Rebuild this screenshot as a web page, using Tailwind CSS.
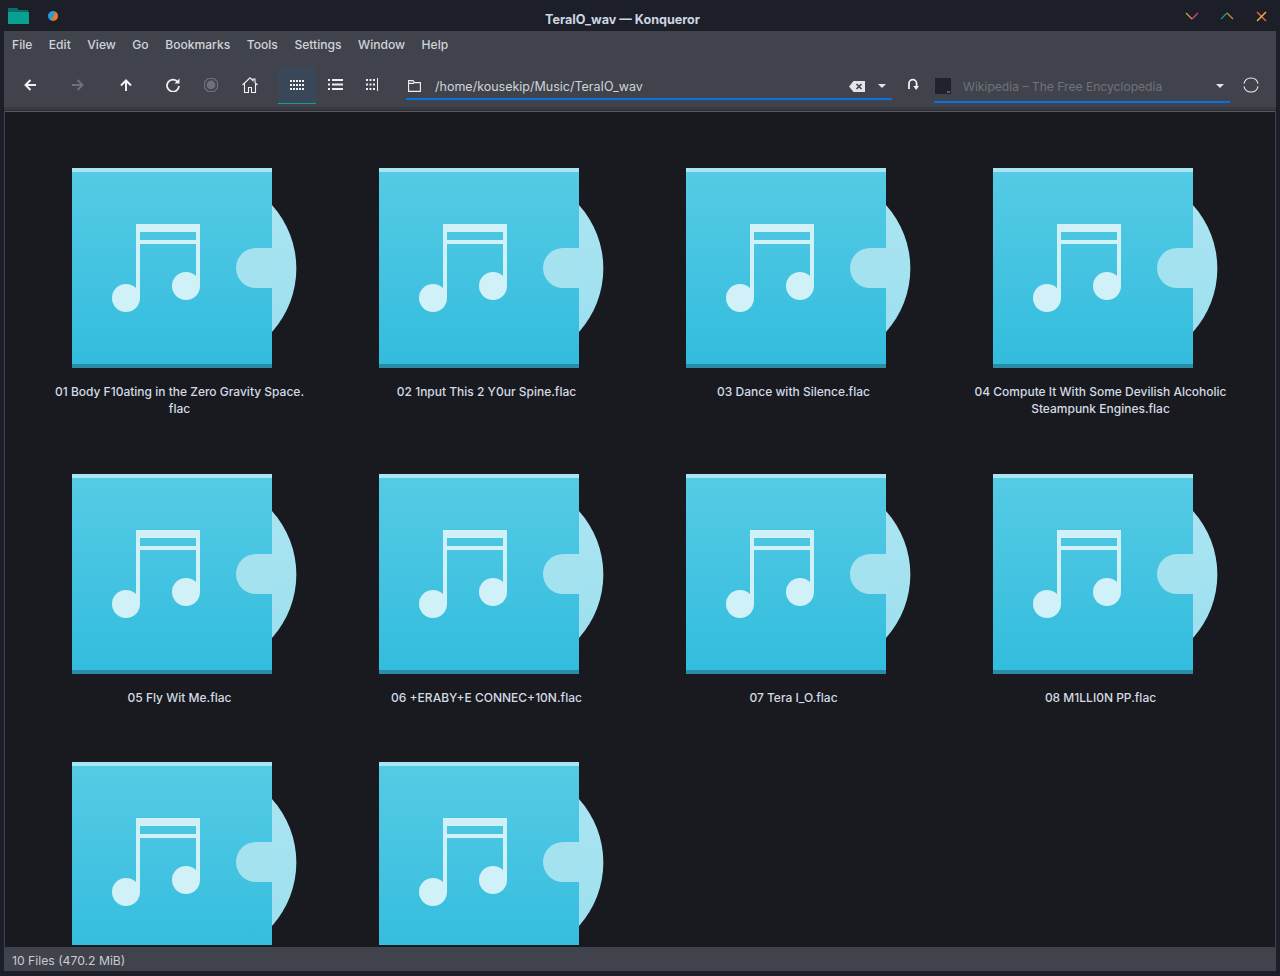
<!DOCTYPE html>
<html lang="en">
<head>
    <meta charset="UTF-8">
    <title>TeraIO_wav — Konqueror</title>
    <script src="https://cdn.jsdelivr.net/npm/@tailwindcss/browser@4"></script>
</head>
<body class="bg-[#1c1f28] w-[1280px] h-[976px] overflow-hidden flex flex-col font-['Inter',sans-serif] text-[13px]">

    <!-- shared file icon -->
    <svg class="absolute w-0 h-0">
        <defs>
            <linearGradient id="cover" x1="0" y1="0" x2="0" y2="1">
                <stop offset="0" stop-color="#56cbe5"/>
                <stop offset="1" stop-color="#32bcdd"/>
            </linearGradient>
            <linearGradient id="disc" x1="0" y1="0" x2="0" y2="1">
                <stop offset="0" stop-color="#abe4f1"/>
                <stop offset="1" stop-color="#9de0f0"/>
            </linearGradient>
        </defs>
        <symbol id="flac" viewBox="0 0 256 200">
            <path d="M220 37A95 95 0 0 1 220 164Z" fill="url(#disc)"/>
            <rect x="20" y="0" width="200" height="200" fill="url(#cover)"/>
            <rect x="20" y="0" width="200" height="4" fill="#a8e4f1"/>
            <rect x="20" y="196" width="200" height="4" fill="#2a8da5"/>
            <path d="M220 80H204A20 20 0 0 0 204 120H220Z" fill="#a5e2f0"/>
            <path d="M84 56H148V118H144V76H88V130H84ZM88 64V72H144V64Z" fill="#d0f1f8"/>
            <circle cx="74" cy="130" r="14" fill="#d0f1f8"/>
            <circle cx="134" cy="118" r="14" fill="#d0f1f8"/>
        </symbol>
    </svg>

    <!-- title bar -->
    <header class="h-[31px] shrink-0 flex items-center relative text-[#d6dae2]">
        <svg class="ml-[7px] mt-[1px]" width="22" height="18" viewBox="0 0 22 18"><path d="M1 1H10L12 3H21V6H1Z" fill="#0b6e66"/><rect x="1" y="5" width="21" height="12" fill="#0aa091"/></svg>
        <span class="ml-[19px] mt-[1px] w-[10px] h-[10px] rounded-full bg-[linear-gradient(115deg,#2a9be0_45%,#f5781f_62%)]"></span>
        <span class="absolute left-0 right-0 top-[12px] pr-[35px] text-center font-bold text-[12.6px] leading-[15px] text-[#cdd5e2]">TeraIO_wav — Konqueror</span>
        <div class="ml-auto flex items-center mt-[1px]">
            <svg width="14" height="9" viewBox="0 0 14 9" fill="none" stroke-width="1.2" class="mr-[21px]"><path d="M1 1L7 7" stroke="#d8a13c"/><path d="M7 7L13 1" stroke="#d93fa0"/></svg>
            <svg width="14" height="9" viewBox="0 0 14 9" fill="none" stroke-width="1.2" class="mr-[22px]"><path d="M1 7L7 1" stroke="#1f9c8e"/><path d="M7 1L13 7" stroke="#c98a3a"/></svg>
            <svg width="11" height="11" viewBox="0 0 11 11" fill="none" stroke-width="1.4" class="mr-[13px]"><path d="M1 1L10 10" stroke="#f0623c"/><path d="M10 1L1 10" stroke="#f2b53a"/></svg>
        </div>
    </header>

    <main class="mx-[4px] flex-1 min-h-0 flex flex-col bg-[#40434c]">
        <!-- menu bar -->
        <nav class="h-[28px] shrink-0 flex items-center gap-[16.5px] pl-[8px] text-[#d0d3d9] text-[12.1px] font-medium">
            <span>File</span><span>Edit</span><span>View</span><span>Go</span><span>Bookmarks</span><span>Tools</span><span>Settings</span><span>Window</span><span>Help</span>
        </nav>

        <!-- tool bar -->
        <div class="h-[48px] shrink-0 flex items-center relative text-[#e6e8ec]">
            <svg width="12" height="12" viewBox="0 0 12 12" fill="none" stroke="#eef0f3" stroke-width="2" class="ml-[20px] mt-[4px]"><path d="M12 6H2M6.500 1L1.500 6L6.500 11"/></svg>
            <svg width="12" height="12" viewBox="0 0 12 12" fill="none" stroke="#6d7078" stroke-width="2" class="ml-[36px] mt-[4px]"><path d="M0 6H10M5.500 1L10.500 6L5.500 11"/></svg>
            <svg width="12" height="12" viewBox="0 0 12 12" fill="none" stroke="#eef0f3" stroke-width="2" class="ml-[36px] mt-[4px]"><path d="M6 12V2M1 6.500L6 1.500L11 6.500"/></svg>
            <svg width="14" height="14" viewBox="0 0 14 14" fill="none" stroke="#eef0f3" stroke-width="1.800" class="ml-[34px] mt-[4px]"><path d="M11.800 4A6 6 0 1 0 13 8"/><path d="M13.500 .5V5.500H8.500Z" fill="#eef0f3" stroke="none"/></svg>
            <svg width="14" height="14" viewBox="0 0 14 14" class="ml-[24px] mt-[4px]"><path d="M4 .5H10L13.500 4V10L10 13.500H4L.5 10V4Z" fill="none" stroke="#6d7078" stroke-width="1.200"/><circle cx="7" cy="7" r="4.400" fill="#6d7078"/></svg>
            <svg width="16" height="16" viewBox="0 0 16 16" fill="none" stroke="#eef0f3" stroke-width="1.100" class="ml-[24px] mt-[4px]"><path d="M.5 8L8 .8L11 3.700V2H13V5.600L15.500 8M2.500 6.500V15.500H6.500V10.500H9.500V15.500H13.500V6.500"/></svg>
            <div class="ml-[20px] w-[38px] h-[37px] mt-[5px] bg-[#394759] border-b border-[#16a085] flex items-center justify-center">
                <svg width="14" height="10" viewBox="0 0 14 10" fill="#eef0f3"><path d="M0 0h2v2H0zM3 0h2v2H3zM6 0h2v2H6zM9 0h2v2H9zM12 0h2v2h-2zM0 4h2v2H0zM3 4h2v2H3zM6 4h2v2H6zM9 4h2v2H9zM12 4h2v2h-2zM0 8h2v2H0zM3 8h2v2H3zM6 8h2v2H6zM9 8h2v2H9zM12 8h2v2h-2z"/></svg>
            </div>
            <svg width="15" height="11" viewBox="0 0 15 11" fill="#eef0f3" class="ml-[12px] mt-[3px]"><path d="M0 0h2v2H0zM4 0h11v2H4zM0 4.500h2v2H0zM4 4.500h11v2H4zM0 9h2v2H0zM4 9h11v2H4z"/></svg>
            <svg width="13" height="13" viewBox="0 0 13 13" fill="#eef0f3" class="ml-[23px] mt-[3px]"><path d="M0 1h2v2H0zM3.500 1h2v2h-2zM7 1h2v2H7zM0 5.500h2v2H0zM3.500 5.500h2v2h-2zM7 5.500h2v2H7zM0 10h2v2H0zM3.500 10h2v2h-2zM7 10h2v2H7zM11 0h1v13h-1z"/></svg>

            <!-- location bar -->
            <div class="ml-[27px] w-[486px] h-[26px] mt-[8px] border-b-2 border-[#0a6fe0] flex items-center pl-[2px] pr-[6px]">
                <svg width="13" height="12" viewBox="0 0 13 12" fill="none" stroke="#eef0f3" stroke-width="1.100"><path d="M.6 11.400V.6H5L6.500 2.600H12.400V11.400ZM.6 3.400H6"/></svg>
                <span class="ml-[14px] mt-[2px] text-[#d0d3d9] text-[12.5px]">/home/kousekip/Music/TeraIO_wav</span>
                <svg width="16" height="11" viewBox="0 0 16 11" class="ml-auto" fill="#e2e4e8"><path d="M4.500 0H16V11H4.500L0 5.500Z"/><path d="M7.500 3L12.500 8M12.500 3L7.500 8" stroke="#40434c" stroke-width="1.600"/></svg>
                <span class="ml-[13px] w-0 h-0 border-x-[4px] border-x-transparent border-t-[4px] border-t-[#e2e4e8]"></span>
            </div>

            <svg width="12" height="13" viewBox="0 0 12 13" fill="none" class="ml-[15px] mt-[2px]"><path d="M2 11V5.500A3.800 3.800 0 0 1 9.600 5.500V8" stroke="#eef0f3" stroke-width="1.800"/><path d="M6.200 8H12L9.200 12Z" fill="#eef0f3"/></svg>

            <!-- search bar -->
            <div class="ml-[15px] w-[296px] h-[32px] mt-[8px] border-b-2 border-[#0a6fe0] flex items-center pl-[1px] pr-[6px]">
                <span class="w-[16px] h-[16px] bg-[#20232d] relative"><span class="absolute right-[1px] bottom-[1px] w-[3px] h-[2px] bg-[#5c5f68]"></span></span>
                <span class="ml-[12px] mt-[2px] text-[#6f727a] text-[12.1px]">Wikipedia – The Free Encyclopedia</span>
                <span class="ml-auto w-0 h-0 border-x-[4px] border-x-transparent border-t-[4px] border-t-[#e2e4e8]"></span>
            </div>
            <svg width="16" height="16" viewBox="0 0 17 17" fill="none" stroke="#eef0f3" stroke-width="1.100" class="ml-[13px] mt-[4px]"><path d="M1 7A7.700 7.700 0 0 1 16 7M16 10A7.700 7.700 0 0 1 1 10"/></svg>
        </div>

        <div class="h-[4px] shrink-0 bg-[#393b43] border-b border-[#2c2e36]"></div>

        <!-- file view -->
        <section class="flex-1 min-h-0 overflow-hidden bg-[#181a20] ml-[1px] mr-[1px] border-t border-[#55585f] border-b-2 border-b-[#181a20] pl-[21px] pt-[56px]">
            <div class="grid grid-cols-[307px_307px_307px_307px] grid-rows-[306px_288px_288px] text-[#d3dae3] text-center leading-[17px] text-[12px] font-medium">
                <div class="flex flex-col items-center"><svg class="w-[256px] h-[200px] shrink-0"><use href="#flac"/></svg><p class="mt-[15px]">01 Body F10ating in the Zero Gravity Space.<br>flac</p></div>
                <div class="flex flex-col items-center"><svg class="w-[256px] h-[200px] shrink-0"><use href="#flac"/></svg><p class="mt-[15px]">02 1nput This 2 Y0ur Spine.flac</p></div>
                <div class="flex flex-col items-center"><svg class="w-[256px] h-[200px] shrink-0"><use href="#flac"/></svg><p class="mt-[15px]">03 Dance with Silence.flac</p></div>
                <div class="flex flex-col items-center"><svg class="w-[256px] h-[200px] shrink-0"><use href="#flac"/></svg><p class="mt-[15px]">04 Compute It With Some Devilish Alcoholic<br>Steampunk Engines.flac</p></div>
                <div class="flex flex-col items-center"><svg class="w-[256px] h-[200px] shrink-0"><use href="#flac"/></svg><p class="mt-[15px]">05 Fly Wit Me.flac</p></div>
                <div class="flex flex-col items-center"><svg class="w-[256px] h-[200px] shrink-0"><use href="#flac"/></svg><p class="mt-[15px]">06 +ERABY+E CONNEC+10N.flac</p></div>
                <div class="flex flex-col items-center"><svg class="w-[256px] h-[200px] shrink-0"><use href="#flac"/></svg><p class="mt-[15px]">07 Tera I_O.flac</p></div>
                <div class="flex flex-col items-center"><svg class="w-[256px] h-[200px] shrink-0"><use href="#flac"/></svg><p class="mt-[15px]">08 M1LLI0N PP.flac</p></div>
                <div class="flex flex-col items-center"><svg class="w-[256px] h-[200px] shrink-0"><use href="#flac"/></svg></div>
                <div class="flex flex-col items-center"><svg class="w-[256px] h-[200px] shrink-0"><use href="#flac"/></svg></div>
            </div>
        </section>

        <!-- status bar -->
        <footer class="h-[24px] shrink-0 flex items-center pl-[8px] pt-[4px] text-[#c8cbd1] text-[12.2px]">10 Files (470.2 MiB)</footer>
    </main>
    <div class="h-[5px] shrink-0"></div>
</body>
</html>
